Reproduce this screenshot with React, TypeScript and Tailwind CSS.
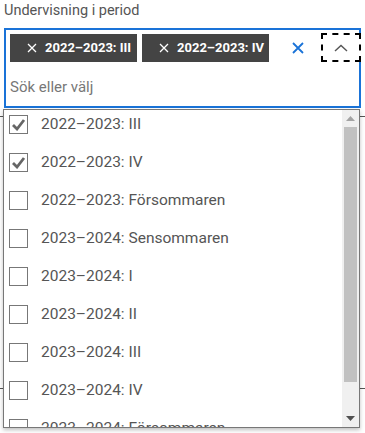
import { useState } from 'react';

const options = [
  '2022–2023: III',
  '2022–2023: IV',
  '2022–2023: Försommaren',
  '2023–2024: Sensommaren',
  '2023–2024: I',
  '2023–2024: II',
  '2023–2024: III',
  '2023–2024: IV',
  '2023–2024: Försommaren',
];

const font = { fontFamily: 'Roboto, "Noto Sans", sans-serif' };

function Chip({ label }: { label: string }) {
  return (
    <span className="flex items-center h-[28px] w-[127px] pl-[17px] bg-[#444444] text-white text-[13px] font-bold gap-[8px] whitespace-nowrap">
      <svg width="10" height="10" viewBox="0 0 10 10" className="shrink-0">
        <path d="M1 1 L9 9 M9 1 L1 9" stroke="white" strokeWidth="1.3" fill="none" />
      </svg>
      {label}
    </span>
  );
}

export default function App() {
  const [selected] = useState<string[]>(['2022–2023: III', '2022–2023: IV']);

  return (
    <div className="relative w-[365px] h-[433px] bg-white overflow-hidden" style={font}>
      {/* Background page content */}
      <div className="absolute left-0 right-0 top-[116px] h-px bg-[#555]" />
      <div className="absolute left-0 right-0 top-[388px] h-px bg-[#555]" />

      <div className="px-[4px] pt-[1px]">
        <label className="block text-[14.5px] text-[#555] leading-[20px] mb-[7px]">Undervisning i period</label>

        <div className="relative border-2 border-[#1a73d8] h-[80px] bg-white">
          <div className="flex items-center gap-[5px] pt-[4px] pl-[4px]">
            {selected.map(s => (
              <Chip key={s} label={s} />
            ))}
            <span className="ml-[18px] flex items-center">
              <svg width="12" height="12" viewBox="0 0 12 12">
                <path d="M1 1 L11 11 M11 1 L1 11" stroke="#1a73d8" strokeWidth="1.8" fill="none" />
              </svg>
            </span>
          </div>
          <div className="absolute right-[-2px] top-[3px] w-[40px] h-[29px] bg-white border-2 border-dashed border-black flex items-center justify-center">
            <svg width="14" height="8" viewBox="0 0 14 8">
              <path d="M1 7 L7 1.5 L13 7" stroke="#555" strokeWidth="1.4" fill="none" />
            </svg>
          </div>
          <div className="pl-[4px] pt-[14px] text-[15px] text-[#777]">Sök eller välj</div>
        </div>
      </div>

      {/* Dropdown menu */}
      <div className="absolute left-[3px] top-[109px] w-[357px] h-[319px] bg-white border border-[#777] shadow-[0_2px_4px_rgba(0,0,0,0.25)] flex overflow-hidden">
        <div className="flex-1 overflow-hidden">
          <div className="-mt-[4.5px]">
            {options.map(o => {
              const checked = selected.includes(o);
              return (
                <div key={o} className="flex items-center h-[38px] pl-[5px] gap-[13px]">
                  <span className="w-[19px] h-[19px] border border-[#777] bg-white flex items-center justify-center shrink-0">
                    {checked && (
                      <svg width="15" height="13" viewBox="0 0 15 13">
                        <path d="M2 7 L6 11 L13 2" stroke="#666" strokeWidth="2.8" fill="none" />
                      </svg>
                    )}
                  </span>
                  <span className="text-[15.5px] text-[#555]">{o}</span>
                </div>
              );
            })}
          </div>
        </div>
        <div className="w-[17px] bg-[#f0f0f0] flex flex-col items-center">
          <div className="h-[17px] flex items-center justify-center">
            <svg width="9" height="5" viewBox="0 0 9 5">
              <path d="M0 5 L4.5 0 L9 5 Z" fill="#a3a3a3" />
            </svg>
          </div>
          <div className="w-[13px] h-[255px] bg-[#c1c1c1]" />
          <div className="flex-1" />
          <div className="h-[17px] flex items-center justify-center">
            <svg width="9" height="5" viewBox="0 0 9 5">
              <path d="M0 0 L4.5 5 L9 0 Z" fill="#505050" />
            </svg>
          </div>
        </div>
      </div>
    </div>
  );
}
